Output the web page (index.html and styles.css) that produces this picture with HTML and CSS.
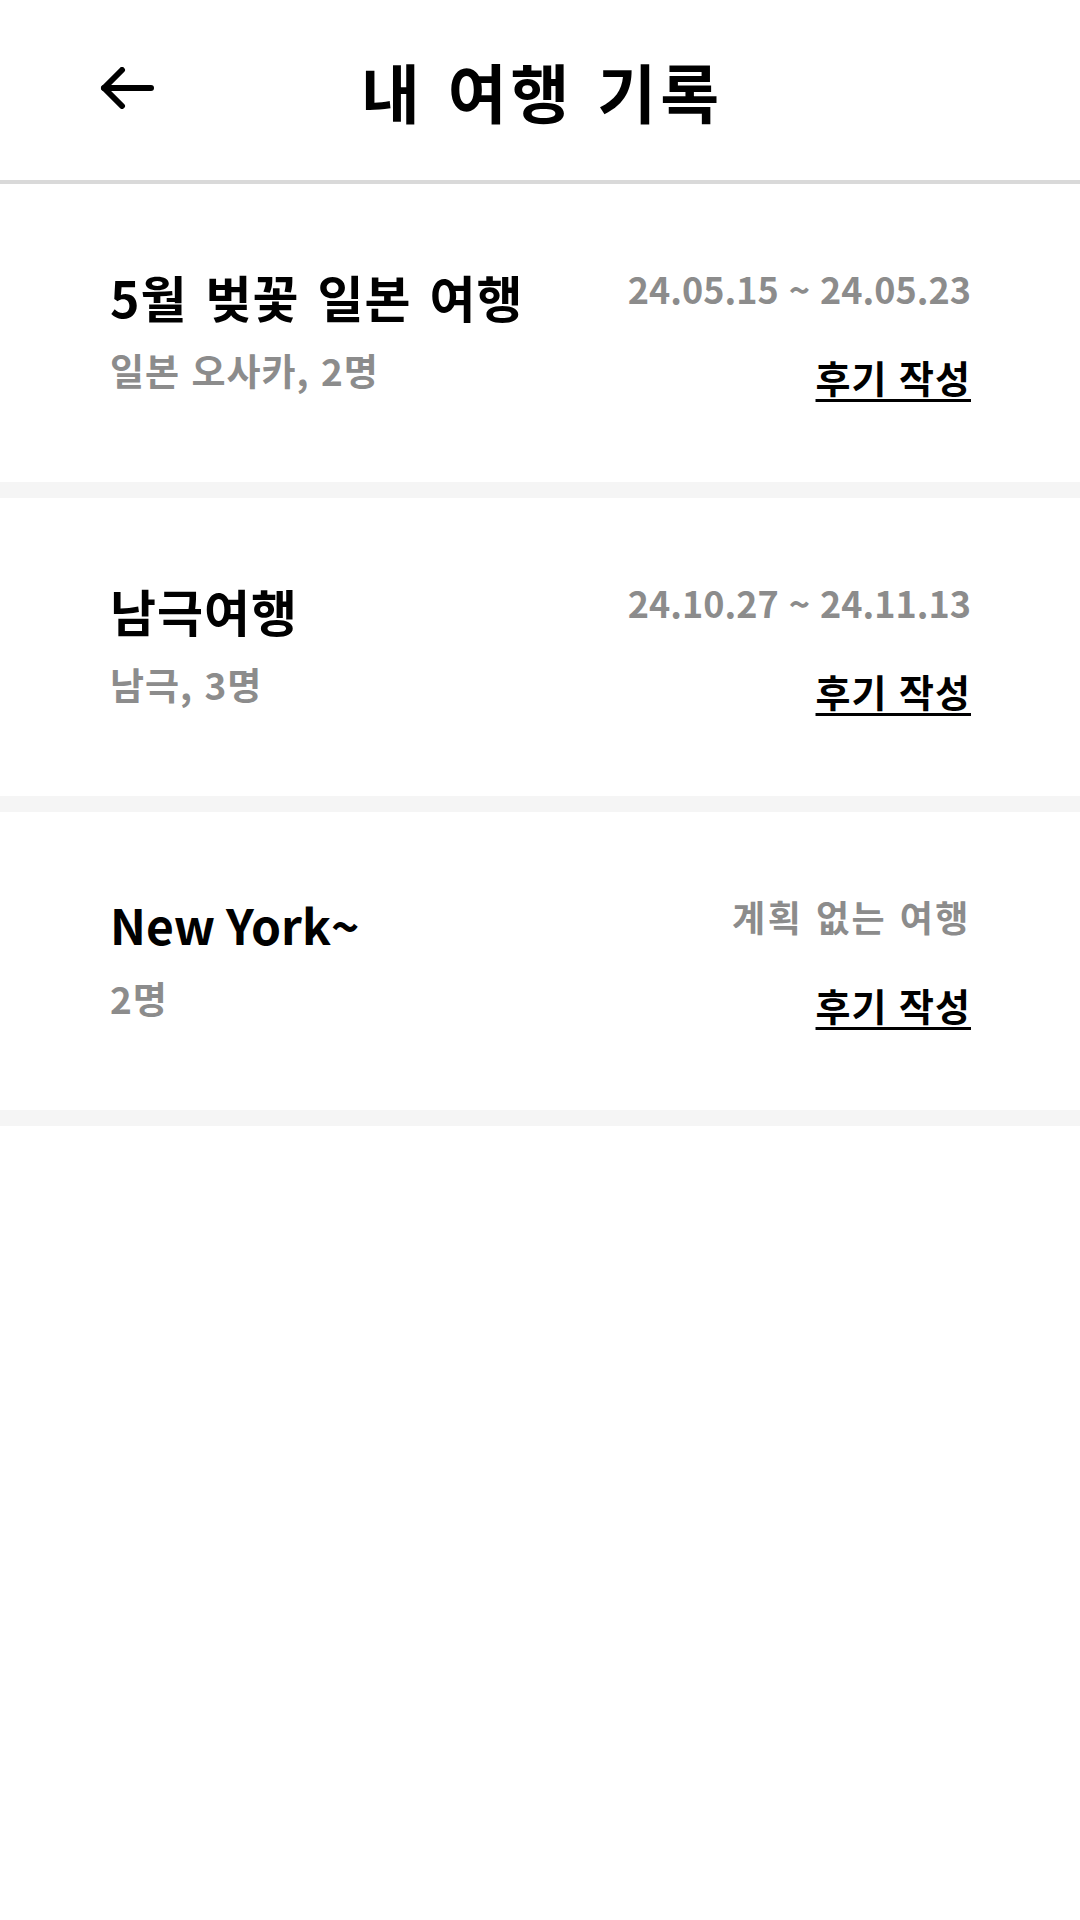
FILE: index.html
```html
<!DOCTYPE html>
<html lang="ko">
<head>
<meta charset="utf-8">
<title>내 여행 기록</title>
<link rel="stylesheet" href="styles.css">
</head>
<body>
<div class="app">
  <header class="topbar">
    <div class="topbar-left">
      <button class="back" aria-label="뒤로">
        <svg width="54" height="42" viewBox="0 0 54 42" fill="none" stroke="#000" stroke-width="6" stroke-linecap="round" stroke-linejoin="round">
          <path d="M51 21H4"/>
          <path d="M22 3L4 21L22 39"/>
        </svg>
      </button>
    </div>
    <h1 class="topbar-title">내 여행 기록</h1>
    <div class="topbar-right"></div>
  </header>

  <main class="trips">
    <section class="trip">
      <div class="trip-main">
        <h2 class="trip-title">5월 벚꽃 일본 여행</h2>
        <p class="trip-meta">일본 오사카, 2명</p>
      </div>
      <div class="trip-side">
        <span class="trip-date">24.05.15 ~ 24.05.23</span>
        <a class="trip-review" href="#">후기 작성</a>
      </div>
    </section>
    <section class="trip">
      <div class="trip-main">
        <h2 class="trip-title">남극여행</h2>
        <p class="trip-meta">남극, 3명</p>
      </div>
      <div class="trip-side">
        <span class="trip-date">24.10.27 ~ 24.11.13</span>
        <a class="trip-review" href="#">후기 작성</a>
      </div>
    </section>
    <section class="trip">
      <div class="trip-main">
        <h2 class="trip-title" lang="en">New York~</h2>
        <p class="trip-meta">2명</p>
      </div>
      <div class="trip-side">
        <span class="trip-date trip-date--text">계획 없는 여행</span>
        <a class="trip-review" href="#">후기 작성</a>
      </div>
    </section>
  </main>
</div>
</body>
</html>
```

FILE: styles.css
```css
* {
  box-sizing: border-box;
}

html, body {
  margin: 0;
  padding: 0;
  background: #ffffff;
}

body {
  font-family: "Noto Sans CJK KR", "Noto Sans", sans-serif;
  color: #000;
}

.app {
  width: 1080px;
  min-height: 1920px;
  background: #fff;
}

.topbar {
  height: 184px;
  border-bottom: 4px solid #d9d9d9;
  display: grid;
  grid-template-columns: 1fr auto 1fr;
  align-items: center;
}

.topbar-left {
  padding-left: 100px;
  padding-bottom: 4px;
  display: flex;
  align-items: center;
}

.back {
  border: 0;
  background: none;
  padding: 0;
  margin: 0;
  display: flex;
  cursor: pointer;
}

.topbar-title {
  margin: 0;
  font-size: 64px;
  font-weight: 700;
  line-height: 1.2;
  letter-spacing: 4px;
  word-spacing: 2px;
  padding-left: 4px;
}

.trip {
  display: flex;
  justify-content: space-between;
  align-items: flex-start;
  padding: 83px 109px 84px 110px;
  border-bottom: 16px solid #f5f5f5;
}

.trip-main {
  display: flex;
  flex-direction: column;
  gap: 24px;
}

.trip-title {
  margin: 0;
  font-size: 50px;
  font-weight: 700;
  line-height: 58px;
  letter-spacing: 1px;
  word-spacing: 3px;
}

.trip-title:lang(en) {
  font-size: 48px;
  letter-spacing: 0;
  word-spacing: 0;
}

.trip-meta {
  margin: 0;
  font-size: 37px;
  font-weight: 700;
  line-height: 43px;
  letter-spacing: 1px;
  color: #8c8c8c;
}

.trip-side {
  display: flex;
  flex-direction: column;
  align-items: flex-end;
  gap: 45px;
}

.trip-date {
  font-size: 36px;
  font-weight: 700;
  line-height: 43px;
  color: #8c8c8c;
}

.trip-date--text {
  letter-spacing: 2.5px;
}

.trip-review {
  font-size: 38px;
  font-weight: 700;
  line-height: 43px;
  letter-spacing: 1px;
  color: #000;
  text-decoration: underline;
  text-decoration-thickness: 3px;
  text-underline-offset: 6px;
}
```
